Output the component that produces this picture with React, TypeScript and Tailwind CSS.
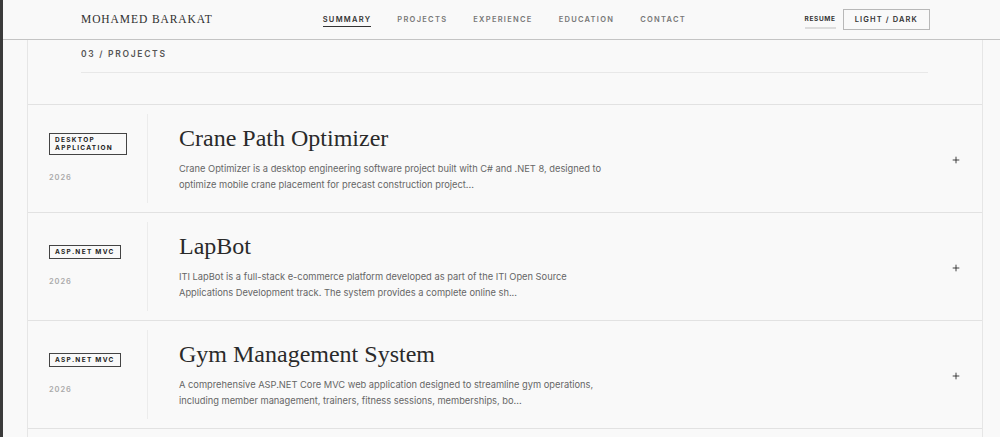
import React from 'react';
import { Plus } from 'lucide-react';

interface Project {
  category: string;
  year: string;
  title: string;
  summary: string;
}

const projects: Project[] = [
  {
    category: 'Desktop Application',
    year: '2026',
    title: 'Crane Path Optimizer',
    summary:
      'Crane Optimizer is a desktop engineering software project built with C# and .NET 8, designed to optimize mobile crane placement for precast construction project...',
  },
  {
    category: 'ASP.NET MVC',
    year: '2026',
    title: 'LapBot',
    summary:
      'ITI LapBot is a full-stack e-commerce platform developed as part of the ITI Open Source Applications Development track. The system provides a complete online sh...',
  },
  {
    category: 'ASP.NET MVC',
    year: '2026',
    title: 'Gym Management System',
    summary:
      'A comprehensive ASP.NET Core MVC web application designed to streamline gym operations, including member management, trainers, fitness sessions, memberships, bo...',
  },
];

const navLinks = ['Summary', 'Projects', 'Experience', 'Education', 'Contact'];

const sans = { fontFamily: 'Inter, "Noto Sans", sans-serif' };
const serif = { fontFamily: '"Liberation Serif", "DejaVu Serif", serif' };

const Header: React.FC = () => (
  <header
    className="h-[40px] shrink-0 border-b border-[#c4c4c4] flex items-center pl-[78px] pr-[70px]"
    style={sans}
  >
    <div className="text-[11.5px] tracking-[0.08em] text-[#2f2f2f] uppercase" style={serif}>
      Mohamed Barakat
    </div>
    <nav className="flex items-center gap-[26px] ml-[110px] pt-[2px]">
      {navLinks.map((link, i) => (
        <a
          key={link}
          className={`text-[7.5px] font-semibold tracking-[0.17em] uppercase pb-[1px] ${
            i === 0 ? 'text-[#333] border-b border-[#333]' : 'text-[#777] border-b border-transparent'
          }`}
        >
          {link}
        </a>
      ))}
    </nav>
    <div className="ml-auto flex items-center gap-[7px]">
      <a className="text-[6.5px] font-bold tracking-[0.1em] text-[#333] uppercase pt-[5px] pb-[3px] border-b-2 border-[#dcdcdc]">
        Resume
      </a>
      <button className="h-[21px] px-[11px] border border-[#b8b8b8] text-[7.5px] font-semibold tracking-[0.15em] text-[#333] uppercase">
        Light / Dark
      </button>
    </div>
  </header>
);

const ProjectRow: React.FC<{ project: Project }> = ({ project }) => (
  <div className="h-[108px] border-t border-[#e2e2e2] flex items-stretch py-[9px]">
    <div className="w-[120px] shrink-0 border-r border-[#ececec] pl-[21px] pr-[20px] flex flex-col justify-center items-start">
      <span className="inline-block border border-[#444] px-[5px] py-[2px] text-[6.5px] leading-[8px] font-bold tracking-[0.2em] text-[#222] uppercase">
        {project.category}
      </span>
      <span className="mt-[17px] text-[7.5px] font-semibold tracking-[0.12em] text-[#aaa]">{project.year}</span>
    </div>
    <div className="flex-1 pl-[31px] flex flex-col justify-center">
      <h3 className="text-[24px] leading-[28px] font-normal text-[#2a2a2a]" style={serif}>
        {project.title}
      </h3>
      <p className="mt-[9px] max-w-[426px] text-[9.3px] leading-[16px] text-[#666]">{project.summary}</p>
    </div>
    <div className="w-[60px] flex items-center justify-end pr-[21px] pt-[3px]">
      <Plus size={10} strokeWidth={2} className="text-[#1f1f1f]" />
    </div>
  </div>
);

const App: React.FC = () => (
  <div className="h-[437px] flex overflow-hidden bg-[#f9f9f9]" style={sans}>
    <div className="w-[3px] shrink-0 bg-[#3b3b3b]" />
    <div className="flex-1 flex flex-col min-w-0">
      <Header />
      <main className="flex-1 pl-[24px] pr-[17px] min-h-0">
        <div className="h-full border-x border-[#e6e6e6]">
          <div className="pl-[53px] pr-[54px] pt-[8px]">
            <h2 className="text-[8.5px] leading-[12px] font-semibold tracking-[0.2em] text-[#555] uppercase">
              03 / Projects
            </h2>
            <div className="mt-[12px] h-px bg-[#e8e8e8]" />
          </div>
          <div className="mt-[31px]">
            {projects.map((p) => (
              <ProjectRow key={p.title} project={p} />
            ))}
            <div className="border-t border-[#e2e2e2]" />
          </div>
        </div>
      </main>
    </div>
  </div>
);

export default App;
